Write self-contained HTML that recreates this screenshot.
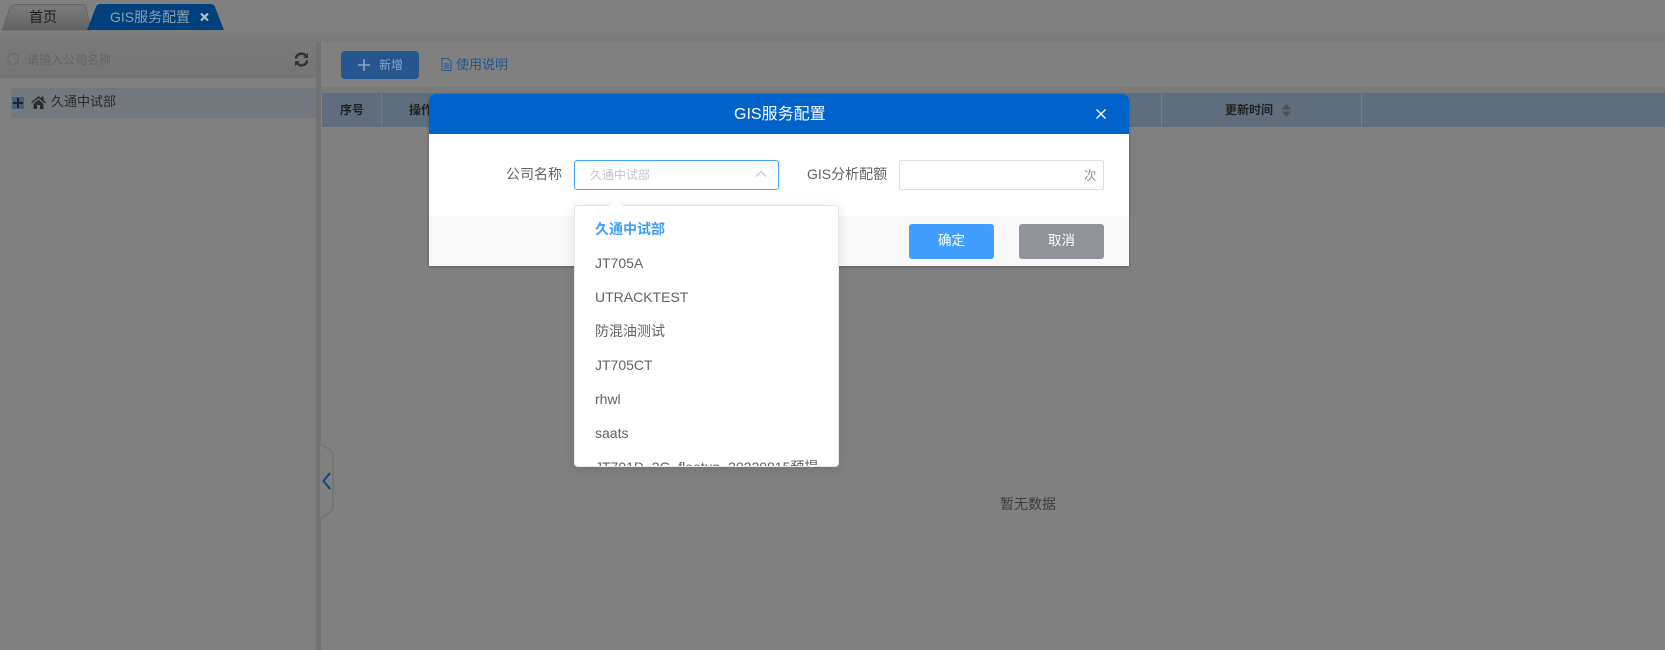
<!DOCTYPE html>
<html lang="zh"><head><meta charset="utf-8"><title>GIS服务配置</title>
<style>
*{box-sizing:border-box}
html,body{margin:0;padding:0;width:1665px;height:650px;overflow:hidden;background:#808080;font-family:"Liberation Sans","Noto Sans CJK SC",sans-serif;font-size:14px}
.a{position:absolute;white-space:nowrap}
.t{line-height:20px}
</style></head><body>
<div class="a" style="left:0;top:0;width:1665px;height:650px;overflow:hidden">
<!-- top strip -->
<div class="a" style="left:0;top:30px;width:1665px;height:12px;background:#7a7a7a"></div>
<div class="a" style="left:0;top:30px;width:1665px;height:7px;background:#7e7e7e"></div>
<svg class="a" style="left:0;top:0" width="240" height="32">
<defs><linearGradient id="g" x1="0" y1="0" x2="0" y2="1"><stop offset="0" stop-color="#7c7c7c"/><stop offset="1" stop-color="#626262"/></linearGradient></defs>
<path d="M2 30 L10 8 Q12 4.500 15 4.500 L82 4.500 Q85 4.500 86 8 L91 30 Z" fill="url(#g)" stroke="#666" stroke-width="1"/>
<path d="M87 30 L96 7 Q97 4 100 4 L210 4 Q214 4 215 7 L224 30 Z" fill="#00407c"/>
<path d="M201 13.500 L208 20.500 M208 13.500 L201 20.500" stroke="#b5c0cc" stroke-width="2.200" fill="none"/>
</svg>
<div class="a t" style="left:29px;top:7px;color:#1c1c1c">首页</div>
<div class="a t" style="left:110px;top:7px;color:#8c9eb2">GIS服务配置</div>
<!-- sidebar -->
<div class="a" style="left:0;top:42px;width:316px;height:36px;background:linear-gradient(#7a7a7a,#757575);border-radius:0 4px 4px 0;box-shadow:0 0 1px #6a6a6a"></div>
<svg class="a" style="left:6px;top:52px" width="16" height="16"><circle cx="7" cy="7" r="5.200" fill="none" stroke="#666" stroke-width="1"/><path d="M10.800 10.800L13 13" stroke="#666"/></svg>
<div class="a" style="left:27px;top:50px;font-size:12px;line-height:20px;color:#636363">请输入公司名称</div>
<svg class="a" style="left:294px;top:52px" width="15" height="15" viewBox="0 0 15 15" fill="none" stroke="#343434" stroke-width="2.500"><path d="M1.800 6.500A5.800 5.800 0 0 1 12 3.800"/><path d="M13.200 8.500A5.800 5.800 0 0 1 3 11.200"/><path d="M14 .8V6H9.200z" fill="#343434" stroke="none"/><path d="M1 14.200V9h4.800z" fill="#343434" stroke="none"/></svg>
<div class="a" style="left:11px;top:88px;width:305px;height:30px;background:#74787f"></div>
<div class="a" style="left:12px;top:97px;width:12px;height:12px;background:#41607f"></div>
<svg class="a" style="left:12px;top:97px" width="12" height="12"><path d="M6 1V11M1 6H11" stroke="#222" stroke-width="2"/></svg>
<svg class="a" style="left:31px;top:95px" width="15" height="14" viewBox="0 0 15 14"><path d="M7.500 1L0 7.500 1 8.500 7.500 3 14 8.500 15 7.500 12.500 5.300V1.500H10.500V3.500Z M2.500 9V14H6V10H9V14H12.500V9L7.500 4.500Z" fill="#2a2a2a"/></svg>
<div class="a t" style="left:51px;top:92px;font-size:13px;color:#2a2a2a">久通中试部</div>
<!-- splitter -->
<div class="a" style="left:316px;top:42px;width:5px;height:608px;background:#727272"></div>
<svg class="a" style="left:318px;top:442px" width="18" height="80"><path d="M2 1.500 L12 8 Q15 10 15 14 V64 Q15 68 12 70 L2 77" fill="#808080" stroke="#6c6c6c"/><path d="M12 31 L5.500 39 L12 47" fill="none" stroke="#00458c" stroke-width="1.800"/></svg>
<!-- toolbar -->
<div class="a" style="left:321px;top:87px;width:1344px;height:6px;background:#7a7a7a"></div>
<div class="a" style="left:341px;top:51px;width:78px;height:28px;border-radius:4px;background:#255690"></div>
<svg class="a" style="left:357px;top:58px" width="14" height="14"><path d="M7 1V13M1 7H13" stroke="#8ea5bd" stroke-width="1.500"/></svg>
<div class="a" style="left:379px;top:55px;font-size:12px;line-height:20px;color:#8ea5bd">新增</div>
<svg class="a" style="left:441px;top:58px" width="11" height="13" viewBox="0 0 11 13" fill="none" stroke="#1f5590"><path d="M1 .5H7L10 3.500V12.500H1Z"/><path d="M3 6H8M3 8H8M3 10H8"/></svg>
<div class="a" style="left:456px;top:55px;font-size:13px;line-height:20px;color:#1f5590">使用说明</div>
<!-- table header -->
<div class="a" style="left:322px;top:93px;width:1343px;height:34px;background:#5f6e7e"></div>
<div class="a" style="left:381px;top:93px;width:1px;height:34px;background:#6f7c8a"></div>
<div class="a" style="left:1161px;top:93px;width:1px;height:34px;background:#6f7c8a"></div>
<div class="a" style="left:1361px;top:93px;width:1px;height:34px;background:#6f7c8a"></div>
<div class="a" style="left:340px;top:100px;font-size:12px;font-weight:bold;line-height:20px;color:#222">序号</div>
<div class="a" style="left:409px;top:100px;font-size:12px;font-weight:bold;line-height:20px;color:#222">操作</div>
<div class="a" style="left:1225px;top:100px;font-size:12px;font-weight:bold;line-height:20px;color:#222">更新时间</div>
<svg class="a" style="left:1281px;top:104px" width="11" height="13"><path d="M5.500 0L10.500 5.500H.5Z M5.500 13L10.500 7.500H.5Z" fill="#4f4f4f"/></svg>
<div class="a" style="left:1000px;top:494px;font-size:14px;line-height:20px;color:#3c3c3c">暂无数据</div>
<!-- modal -->
<div class="a" style="left:429px;top:94px;width:700px;height:172px;background:#fff;border-radius:6px 6px 0 0;box-shadow:0 1px 3px rgba(0,0,0,.3);overflow:hidden">
<div class="a" style="left:0;top:0;width:700px;height:40px;background:#0063cc"></div>
<div class="a" style="left:0;top:122px;width:700px;height:50px;background:#f9f9f9"></div>
</div>
<div class="a" style="left:734px;top:105px;font-size:16px;line-height:20px;color:#fff">GIS服务配置</div>
<svg class="a" style="left:1095px;top:108px" width="12" height="12"><path d="M1.500 1.500L10.500 10.500M10.500 1.500L1.500 10.500" stroke="#fff" stroke-width="1.300"/></svg>
<div class="a t" style="left:506px;top:164px;font-size:14px;color:#606266">公司名称</div>
<div class="a" style="left:574px;top:160px;width:205px;height:30px;border:1px solid #409eff;border-radius:3px;background:#fff"></div>
<div class="a t" style="left:590px;top:165px;font-size:12px;color:#c0c4cc">久通中试部</div>
<svg class="a" style="left:755px;top:170px" width="12" height="8"><path d="M1 6.500L6 1.500L11 6.500" fill="none" stroke="#c0c4cc" stroke-width="1.200"/></svg>
<div class="a t" style="left:807px;top:164px;font-size:14px;color:#606266">GIS分析配额</div>
<div class="a" style="left:899px;top:160px;width:205px;height:30px;border:1px solid #dcdfe6;border-radius:2px;background:#fff"></div>
<div class="a t" style="left:1084px;top:166px;font-size:12.500px;color:#909399">次</div>
<div class="a" style="left:909px;top:224px;width:85px;height:35px;border-radius:3px;background:#409eff;color:#fff;font-size:13.500px;line-height:34px;text-align:center">确定</div>
<div class="a" style="left:1019px;top:224px;width:85px;height:35px;border-radius:3px;background:#909399;color:#fff;font-size:13.500px;line-height:34px;text-align:center">取消</div>
<!-- dropdown -->
<div class="a" style="left:574px;top:205px;width:265px;height:262px;background:#fff;border:1px solid #e4e7ed;border-radius:4px;box-shadow:0 2px 12px rgba(0,0,0,.1);overflow:hidden;color:#606266">
<div class="a" style="left:20px;top:13px;line-height:20px;color:#409eff;font-weight:bold">久通中试部</div>
<div class="a" style="left:20px;top:47px;line-height:20px">JT705A</div>
<div class="a" style="left:20px;top:81px;line-height:20px">UTRACKTEST</div>
<div class="a" style="left:20px;top:115px;line-height:20px">防混油测试</div>
<div class="a" style="left:20px;top:149px;line-height:20px">JT705CT</div>
<div class="a" style="left:20px;top:183px;line-height:20px">rhwl</div>
<div class="a" style="left:20px;top:217px;line-height:20px">saats</div>
<div class="a" style="left:20px;top:251px;line-height:20px">JT701D_2G_fleetup_20220815预提</div>
</div>
<svg class="a" style="left:609px;top:199px" width="14" height="7"><path d="M0 7L7 0L14 7Z" fill="#fff"/></svg>
</div>
</body></html>
